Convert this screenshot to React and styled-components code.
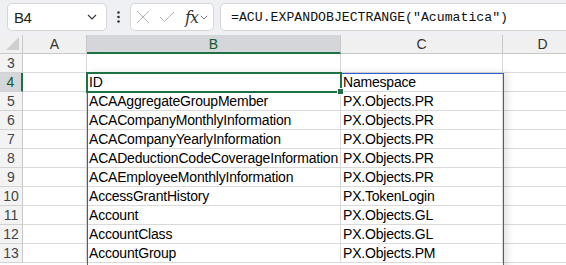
import React from 'react';
import styled, { createGlobalStyle } from 'styled-components';

const GlobalStyle = createGlobalStyle`
  html, body {
    margin: 0;
    padding: 0;
    background: #fff;
    overflow: hidden;
  }
  body {
    font-family: "Liberation Sans", Arial, sans-serif;
  }
`;

const COLS = [23, 64, 254, 162, 80];
const ROW_H = 19;
const GREEN = '#1e7145';
const BLUE = '#2f5fcf';

const rows = [
  ['ID', 'Namespace'],
  ['ACAAggregateGroupMember', 'PX.Objects.PR'],
  ['ACACompanyMonthlyInformation', 'PX.Objects.PR'],
  ['ACACompanyYearlyInformation', 'PX.Objects.PR'],
  ['ACADeductionCodeCoverageInformation', 'PX.Objects.PR'],
  ['ACAEmployeeMonthlyInformation', 'PX.Objects.PR'],
  ['AccessGrantHistory', 'PX.TokenLogin'],
  ['Account', 'PX.Objects.GL'],
  ['AccountClass', 'PX.Objects.GL'],
  ['AccountGroup', 'PX.Objects.PM'],
  ['', ''],
];

const Page = styled.div`
  width: 566px;
  height: 265px;
  overflow: hidden;
  display: flex;
  flex-direction: column;
`;

const Toolbar = styled.div`
  height: 35px;
  flex: none;
  box-sizing: border-box;
  padding: 3px 0 4px 7px;
  display: flex;
  align-items: stretch;
  background: #eef0f3;
`;

const Box = styled.div`
  background: #fff;
  border: 1px solid #d6d6d6;
  border-radius: 5px;
  box-sizing: border-box;
  display: flex;
  align-items: center;
  width: ${p => p.$w}px;
  flex: ${p => (p.$grow ? '1' : 'none')};
  margin-right: ${p => (p.$grow ? '-10px' : '0')};
`;

const NameText = styled.span`
  font-size: 15px;
  color: #222;
  padding-left: 6px;
  flex: 1;
  letter-spacing: -0.5px;
`;

const Dots = styled.div`
  width: 23px;
  display: flex;
  align-items: center;
  justify-content: center;
`;

const FxText = styled.span`
  font-family: "DejaVu Serif", "Liberation Serif", serif;
  font-style: italic;
  font-size: 16px;
  color: #333;
  margin-left: 10px;
  letter-spacing: -1px;
`;

const Formula = styled.span`
  font-family: "Liberation Mono", "DejaVu Sans Mono", monospace;
  font-size: 13.2px;
  color: #111;
  padding-left: 10px;
  white-space: nowrap;
`;

const Sheet = styled.div`
  position: relative;
  flex: 1;
  display: grid;
  grid-template-columns: ${COLS.map(c => c + 'px').join(' ')};
  grid-auto-rows: ${ROW_H}px;
  overflow: hidden;
`;

const Cell = styled.div`
  box-sizing: border-box;
  border-right: 1px solid #dadada;
  border-bottom: 1px solid #dadada;
  font-size: 14px;
  color: #000;
  padding: 0 0 0 2px;
  display: flex;
  align-items: center;
  white-space: nowrap;
  overflow: hidden;
  letter-spacing: -0.2px;
`;

const ColHead = styled.div`
  box-sizing: border-box;
  background: ${p => (p.$sel ? '#d4d6d9' : '#f0f0f0')};
  border-right: 1px solid #c9c9c9;
  border-bottom: ${p => (p.$sel ? `2px solid ${GREEN}` : '1px solid #c9c9c9')};
  display: flex;
  align-items: center;
  justify-content: center;
  font-size: 14px;
  color: ${p => (p.$sel ? '#0f5a2e' : '#333')};
  position: relative;
`;

const RowHead = styled.div`
  box-sizing: border-box;
  background: ${p => (p.$sel ? '#d4d6d9' : '#f3f3f3')};
  border-bottom: 1px solid #d2d2d2;
  border-right: ${p => (p.$sel ? `2px solid ${GREEN}` : '1px solid #c9c9c9')};
  display: flex;
  align-items: center;
  justify-content: center;
  font-size: 14px;
  color: ${p => (p.$sel ? '#0f5a2e' : '#444')};
`;

const Corner = styled(ColHead)`
  justify-content: flex-end;
  align-items: flex-end;
  padding: 0 3px 3px 0;
`;

const SpillRange = styled.div`
  position: absolute;
  left: ${COLS[0] + COLS[1]}px;
  top: ${ROW_H * 2}px;
  width: ${COLS[2] + COLS[3] + 1}px;
  height: 300px;
  box-sizing: border-box;
  border: 1.5px solid ${BLUE};
  box-shadow: 3px 0 8px rgba(0, 0, 0, 0.12);
  pointer-events: none;
`;

const Selection = styled.div`
  position: absolute;
  left: ${COLS[0] + COLS[1] - 1}px;
  top: ${ROW_H * 2 - 1}px;
  width: ${COLS[2] + 2}px;
  height: ${ROW_H + 2}px;
  box-sizing: border-box;
  border: 2px solid ${GREEN};
  pointer-events: none;
`;

const Handle = styled.div`
  position: absolute;
  right: -4px;
  bottom: -4px;
  width: 5px;
  height: 5px;
  background: ${GREEN};
  border: 1px solid #fff;
`;

const Chevron = ({ size = 10, color = '#333' }) => (
  <svg width={size} height={size * 0.6} viewBox="0 0 10 6">
    <path d="M1 1 L5 5 L9 1" fill="none" stroke={color} strokeWidth="1.1" />
  </svg>
);

const App = () => {
  const letters = ['A', 'B', 'C', 'D'];
  return (
    <Page>
      <GlobalStyle />
      <Toolbar>
        <Box $w={100}>
          <NameText>B4</NameText>
          <span style={{ marginRight: 9, display: 'flex' }}>
            <Chevron size={10} color="#333" />
          </span>
        </Box>
        <Dots>
          <svg width="3" height="12" viewBox="0 0 3 12">
            <circle cx="1.5" cy="1.5" r="1.3" fill="#333" />
            <circle cx="1.5" cy="6" r="1.3" fill="#333" />
            <circle cx="1.5" cy="10.5" r="1.3" fill="#333" />
          </svg>
        </Dots>
        <Box $w={84}>
          <svg width="14" height="14" viewBox="0 0 14 14" style={{ marginLeft: 5 }}>
            <path d="M1 1 L13 13 M13 1 L1 13" stroke="#b4b4b4" strokeWidth="1" fill="none" />
          </svg>
          <svg width="16" height="12" viewBox="0 0 16 12" style={{ marginLeft: 9 }}>
            <path d="M1 6 L5.5 10.5 L15 1" stroke="#b4b4b4" strokeWidth="1" fill="none" />
          </svg>
          <FxText>fx</FxText>
          <span style={{ marginLeft: 2, display: 'flex' }}>
            <Chevron size={8} color="#777" />
          </span>
        </Box>
        <span style={{ width: 6 }} />
        <Box $grow>
          <Formula>=ACU.EXPANDOBJECTRANGE("Acumatica")</Formula>
        </Box>
      </Toolbar>
      <Sheet>
        <Corner>
          <svg width="13" height="13" viewBox="0 0 13 13">
            <path d="M13 0 L13 13 L0 13 Z" fill="#cfcfcf" />
          </svg>
        </Corner>
        {letters.map(l => (
          <ColHead key={l} $sel={l === 'B'}>{l}</ColHead>
        ))}
        {rows.map((r, i) => {
          const n = i + 3;
          const data = i === 0 ? ['', ''] : rows[i - 1];
          return (
            <React.Fragment key={n}>
              <RowHead $sel={n === 4}>{n}</RowHead>
              <Cell />
              <Cell>{data[0]}</Cell>
              <Cell>{data[1]}</Cell>
              <Cell />
            </React.Fragment>
          );
        })}
        <SpillRange />
        <Selection>
          <Handle />
        </Selection>
      </Sheet>
    </Page>
  );
};

export default App;
